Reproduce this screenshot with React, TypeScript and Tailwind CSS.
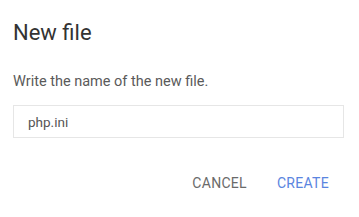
import { useState } from 'react';

export default function App() {
  const [name, setName] = useState('php.ini');

  return (
    <div className="w-[359px] h-[217px] bg-white font-['Roboto',sans-serif] overflow-hidden">
      <div className="px-[13px] pt-[19px]">
        <h2 className="text-[22px] leading-[28px] text-[#333] font-normal">New file</h2>
        <p className="mt-[25px] text-[14.5px] leading-[20px] text-[#5a5a5a]">
          Write the name of the new file.
        </p>
        <input
          value={name}
          onChange={(e) => setName(e.target.value)}
          className="mt-[13px] block w-[331px] h-[33px] px-[14px] border border-[#e6e6e6] text-[13.5px] text-[#555] outline-none"
        />
      </div>
      <div className="flex justify-end items-center gap-[30px] pr-[30px] mt-[35px]">
        <button type="button" className="text-[14px] leading-[20px] text-[#6a6a6a] tracking-[0.3px]">
          CANCEL
        </button>
        <button type="button" className="text-[14px] leading-[20px] text-[#5a85e0] tracking-[0.3px]">
          CREATE
        </button>
      </div>
    </div>
  );
}
